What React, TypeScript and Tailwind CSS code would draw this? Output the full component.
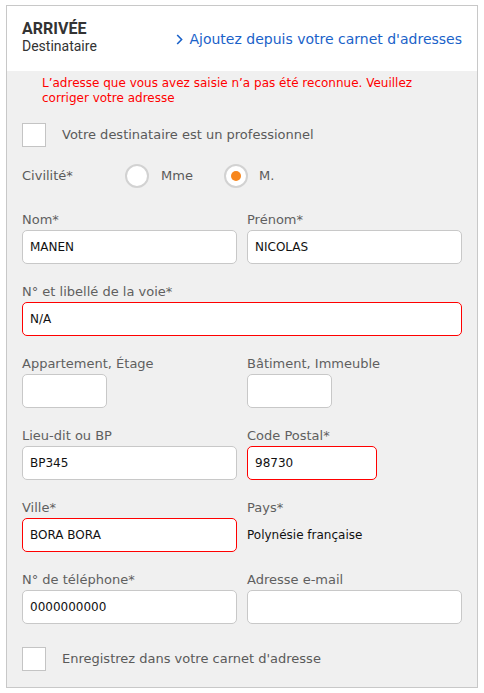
import React from "react";

const body = "font-['DejaVu_Sans',sans-serif]";

function Field({
  label,
  value,
  width = "w-full",
  error = false,
  plain = false,
}: {
  label: string;
  value?: string;
  width?: string;
  error?: boolean;
  plain?: boolean;
}) {
  return (
    <div className="flex flex-col">
      <div className="text-[13px] leading-[16px] text-[#5f5f5f]">{label}</div>
      {plain ? (
        <div className="mt-[2px] flex h-[34px] items-center text-[12px] text-[#111]">{value}</div>
      ) : (
        <div
          className={`mt-[2px] flex h-[34px] items-center rounded-[5px] border bg-white px-[7px] text-[12px] text-[#111] ${width} ${
            error ? "border-[#ff0000]" : "border-[#c8c8c8]"
          }`}
        >
          {value}
        </div>
      )}
    </div>
  );
}

function Checkbox({ label }: { label: string }) {
  return (
    <div className="flex items-center">
      <div className="h-[24px] w-[24px] border border-[#c4c4c4] bg-white" />
      <span className="ml-[16px] text-[13px] text-[#5a5a5a]">{label}</span>
    </div>
  );
}

function Radio({ checked }: { checked?: boolean }) {
  return (
    <div className="flex h-[24px] w-[24px] items-center justify-center rounded-full border-2 border-[#d2d2d2] bg-white">
      {checked && <div className="h-[10px] w-[10px] rounded-full bg-[#f7861c]" />}
    </div>
  );
}

export default function App() {
  return (
    <div className={`pl-[6px] pt-[5px] ${body}`}>
      <div className="w-[472px] border border-[#c8c8c8] bg-[#f0f0f0]">
        {/* Header */}
        <div className="flex h-[65px] items-start justify-between bg-white px-[15px] pt-[13px]">
          <div className="flex flex-col">
            <div className="font-['Roboto',sans-serif] text-[16px] font-bold leading-[19px] text-[#333333]">
              ARRIVÉE
            </div>
            <div className="font-['Roboto',sans-serif] text-[14px] leading-[17px] text-[#333333]">
              Destinataire
            </div>
          </div>
          <div className="mt-[11px] flex items-center text-[14px] leading-[18px] text-[#1a62c9]">
            <svg width="7" height="11" viewBox="0 0 7 11" className="mr-[6px]">
              <path d="M1.2 1 L5.6 5.5 L1.2 10" fill="none" stroke="#1a62c9" strokeWidth="1.6" />
            </svg>
            <span>Ajoutez depuis votre carnet d'adresses</span>
          </div>
        </div>

        {/* Body */}
        <div className="px-[15px] pb-[16px] pt-[5px]">
          <div className="pl-[20px] pr-[20px] text-[12px] leading-[15px] text-[#ff0000]">
            L’adresse que vous avez saisie n’a pas été reconnue. Veuillez corriger votre adresse
          </div>

          <div className="mt-[17px]">
            <Checkbox label="Votre destinataire est un professionnel" />
          </div>

          <div className="mt-[17px] flex items-center text-[13px] text-[#5a5a5a]">
            <span className="w-[103px]">Civilité*</span>
            <div className="flex w-[99px] items-center">
              <Radio />
              <span className="ml-[12px]">Mme</span>
            </div>
            <div className="flex items-center">
              <Radio checked />
              <span className="ml-[11px]">M.</span>
            </div>
          </div>

          <div className="mt-[24px] grid grid-cols-2 gap-x-[10px] gap-y-[20px]">
            <Field label="Nom*" value="MANEN" />
            <Field label="Prénom*" value="NICOLAS" />
            <div className="col-span-2">
              <Field label="N° et libellé de la voie*" value="N/A" error />
            </div>
            <Field label="Appartement, Étage" width="w-[85px]" />
            <Field label="Bâtiment, Immeuble" width="w-[85px]" />
            <Field label="Lieu-dit ou BP" value="BP345" />
            <Field label="Code Postal*" value="98730" width="w-[130px]" error />
            <Field label="Ville*" value="BORA BORA" error />
            <Field label="Pays*" value="Polynésie française" plain />
            <Field label="N° de téléphone*" value="0000000000" />
            <Field label="Adresse e-mail" />
          </div>

          <div className="mt-[23px]">
            <Checkbox label="Enregistrez dans votre carnet d'adresse" />
          </div>
        </div>
      </div>
    </div>
  );
}
